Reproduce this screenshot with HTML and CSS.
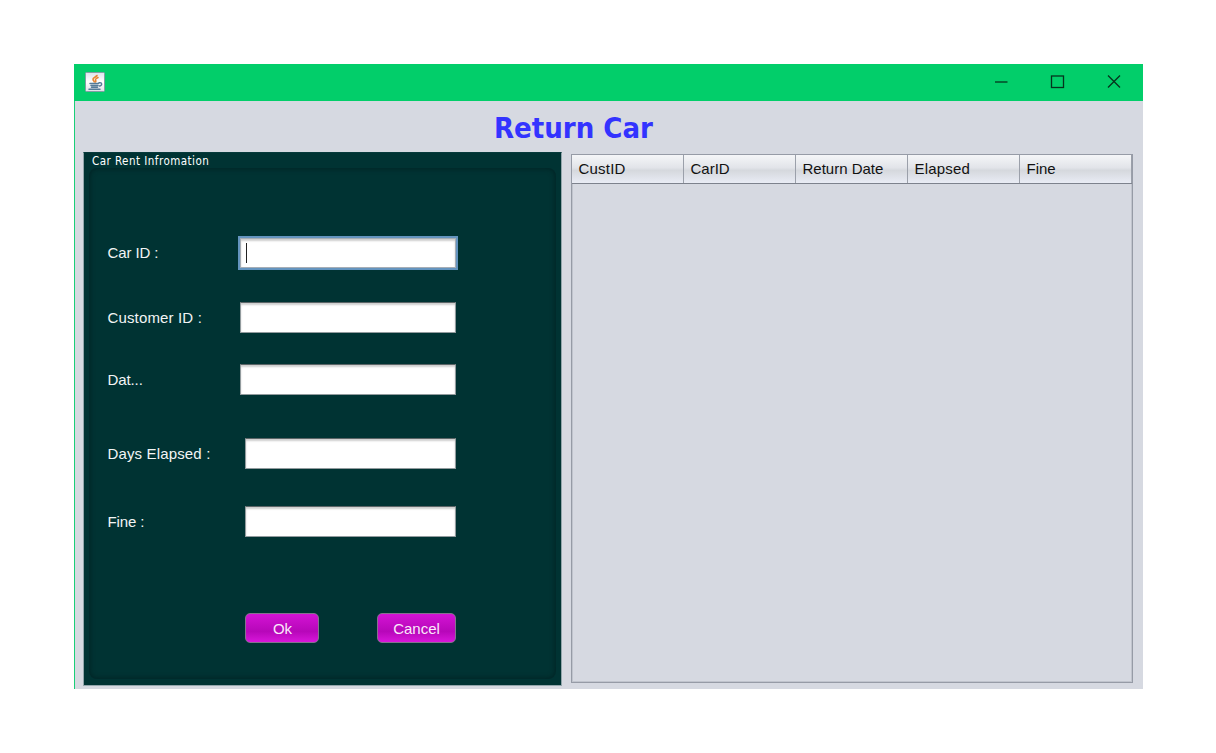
FILE: index.html
```html
<!DOCTYPE html>
<html lang="en">
<head>
<meta charset="utf-8">
<title>Return Car</title>
<link rel="stylesheet" href="styles.css">
</head>
<body>
<main class="window">
  <header class="titlebar">
    <svg class="java" viewBox="0 0 20 20" width="20" height="20">
      <defs><linearGradient id="tile" x1="0" y1="0" x2="0" y2="1"><stop offset="0" stop-color="#dce4ec"/><stop offset=".5" stop-color="#fff"/><stop offset="1" stop-color="#dfe1e8"/></linearGradient></defs>
      <rect x=".5" y=".5" width="19" height="19" rx="1" fill="url(#tile)" stroke="#839da4"/>
      <g fill="none" stroke-linecap="round">
        <path d="M12 3.500C11 5.200 7.500 5.700 8 7.500c.2 1 1.300 1.500 1.300 2.500M13 5.500c-1.500 1-3 1.500-2.500 2.500.4.700.8 1.200 0 2" stroke="#e98532" stroke-width="1.600"/>
        <path d="M5 11.500h8.500M6 13.500h7M6.500 15.200h6M4 17.300h11" stroke="#567b98" stroke-width="1.500"/>
        <path d="M14 10.800c3.500-.8 3.500 2.700.3 3.200" stroke="#567b98" stroke-width="1.400"/>
      </g>
    </svg>
    <svg class="controls" viewBox="0 0 128 16" width="128" height="16" fill="none" stroke="#06331d" stroke-width="1.300">
      <path d="M1 8h12.500"/>
      <rect x="57.500" y="2" width="12" height="11.500"/>
      <path d="M114 1.500l12 12M126 1.500l-12 12"/>
    </svg>
  </header>
  <div class="content">
    <h1 class="heading">Return Car</h1>
    <div class="columns">
      <section class="panel">
        <h2 class="legend">Car Rent Infromation</h2>
        <form class="form">
          <div class="row car"><label class="car-label">Car ID :</label><div class="field focused"><span class="caret"></span></div></div>
          <div class="row customer"><label class="customer-label">Customer ID :</label><div class="field"></div></div>
          <div class="row date"><label class="date-label">Dat...</label><div class="field"></div></div>
          <div class="row days"><label class="days-label">Days Elapsed :</label><div class="field short"></div></div>
          <div class="row fine"><label class="fine-label">Fine :</label><div class="field short"></div></div>
          <div class="buttons"><button type="button" class="button ok">Ok</button><button type="button" class="button cancel">Cancel</button></div>
        </form>
      </section>
      <section class="table">
        <div class="table-head"><div class="th custid">CustID</div><div class="th">CarID</div><div class="th">Return Date</div><div class="th elapsed">Elapsed</div><div class="th">Fine</div></div>
      </section>
    </div>
  </div>
</main>
</body>
</html>
```

FILE: styles.css
```css
* { box-sizing: border-box; }
body { margin: 0; padding: 64px 73px 64px 74px; background: #fff; font: 15px/20px "Liberation Sans", Arial, sans-serif; }
.window { width: 1069px; height: 625px; background: #d6d9e1; display: flex; flex-direction: column; }
.titlebar { flex: none; height: 37px; background: #02ce6a; display: flex; align-items: center; justify-content: space-between; padding: 0 21px 1px 11px; }
.java, .controls { display: block; }
.content { flex: 1; border-left: 1px solid #19cf78; padding: 0 9px 3px 8px; display: flex; flex-direction: column; }
.heading { margin: 0; height: 51px; padding-left: 411px; font: bold 29px/54px "DejaVu Sans Condensed", "Noto Sans", sans-serif; font-stretch: condensed; color: #3333ff; white-space: nowrap; }
.columns { flex: 1; display: flex; gap: 10px; }
.panel { width: 479px; height: 534px; background: #003333; border: 1px solid #93a6ac; border-top-color: #073a3b; padding: 0 5px 6px; }
.legend { margin: 0; height: 15px; padding-left: 3px; font: 11.5px/16px "DejaVu Sans Condensed", "Noto Sans", sans-serif; font-stretch: condensed; letter-spacing: .47px; color: #fff; }
.form { height: 511px; border-radius: 8px; box-shadow: inset 0 0 5px 1px #002425; padding: 69px 0 0 19px; color: #f2f5f5; }
.row { display: flex; align-items: center; justify-content: space-between; width: 348px; height: 31px; white-space: nowrap; }
.customer { margin-top: 34px; }
.date { margin-top: 31px; }
.days { margin-top: 43px; }
.fine { margin-top: 37px; }
.row label { margin-left: -.5px; padding-top: 1px; }
.car-label, .fine-label, .date-label { letter-spacing: -.1px; }
.customer-label { letter-spacing: .15px; }
.days-label { letter-spacing: .15px; }
.field { width: 216px; height: 31px; background: #fff; border: 1px solid #929b9e; border-top-color: #5b6567; box-shadow: inset 0 2px 2px #cecece; }
.field.short { width: 211px; }
.field.focused { border-color: #a6adb5; outline: 2px solid #6494bf; height: 30px; padding: 4px 0 0 5px; }
.caret { display: block; width: 1px; height: 20px; background: #222; }
.buttons { display: flex; justify-content: space-between; width: 211px; margin: 76px 0 0 137px; }
.button { height: 30px; padding: 1px 0 0; border: 1px solid #84728e; border-radius: 5px; background: linear-gradient(#d313d4, #b707b9 62%, #d816da); color: #fbe8fb; font: 15px/27px "Liberation Sans", Arial, sans-serif; }
.ok { width: 74px; padding-left: 1px; }
.cancel { width: 79px; }
.table { width: 562px; height: 529px; margin: 2px 0 0 -1px; border: 1px solid #969ba6; box-shadow: inset 0 0 0 1px #c0c4cd; }
.table-head { display: grid; grid-template-columns: 112px 112px 112px 112px 1fr; height: 29px; border-bottom: 1px solid #7d828d; background: linear-gradient(#f5f6f8, #e2e4e9 45%, #d5d8dd 55%, #e9ecf5); }
.th { border-right: 1px solid #9ba0aa; padding: 4px 0 0 6.5px; color: #111; white-space: nowrap; }
.custid, .elapsed { letter-spacing: .2px; }
```
